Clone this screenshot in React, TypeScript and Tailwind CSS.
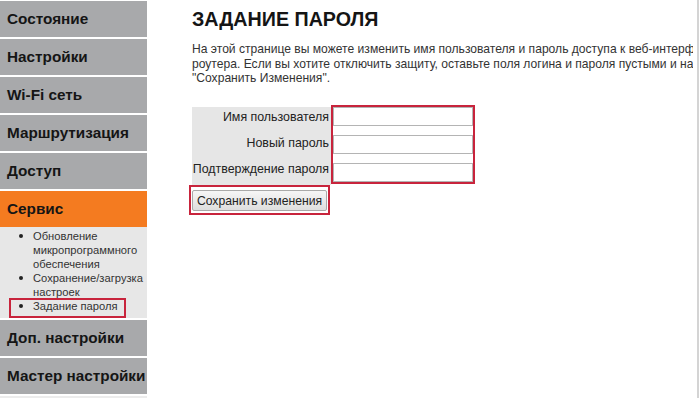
import type { ReactNode } from 'react';

const font = { fontFamily: '"Liberation Sans", Arial, sans-serif' };

function NavItem({ children, active }: { children: ReactNode; active?: boolean }) {
  return (
    <div
      className={`h-[36px] flex items-center pl-[7px] text-[15.3px] font-bold text-[#151515] whitespace-nowrap ${
        active ? 'bg-[#f47b20]' : 'bg-[#a8a9ab]'
      }`}
    >
      {children}
    </div>
  );
}

function SubItem({ children, marked }: { children: ReactNode; marked?: boolean }) {
  return (
    <li className="relative flex">
      <span className="w-[14px] shrink-0 flex justify-start pt-[5px]">
        <span className="w-[4px] h-[4px] rounded-full bg-[#222]" />
      </span>
      <span>{children}</span>
      {marked && (
        <div className="absolute left-[-10px] top-[-1px] w-[117px] h-[20px] border-2 border-[#c8243c]" />
      )}
    </li>
  );
}

export default function App() {
  return (
    <div className="flex w-[700px] h-[398px] bg-white overflow-hidden" style={font}>
      {/* Sidebar */}
      <div className="w-[147px] shrink-0 flex flex-col gap-[2px] pt-[1px]">
        <NavItem>Состояние</NavItem>
        <NavItem>Настройки</NavItem>
        <NavItem>Wi-Fi сеть</NavItem>
        <NavItem>Маршрутизация</NavItem>
        <NavItem>Доступ</NavItem>
        <div className="flex flex-col">
          <NavItem active>Сервис</NavItem>
          <ul className="bg-[#e7e7e7] pl-[19px] pr-[1px] pt-[2px] pb-[5px] text-[11.2px] leading-[14px] text-[#333]">
            <SubItem>
              Обновление
              <br />
              микропрограммного
              <br />
              обеспечения
            </SubItem>
            <SubItem>
              Сохранение/загрузка
              <br />
              настроек
            </SubItem>
            <SubItem marked>Задание пароля</SubItem>
          </ul>
        </div>
        <NavItem>Доп. настройки</NavItem>
        <NavItem>Мастер настройки</NavItem>
        <div className="flex-1 bg-[#ececec]" />
      </div>

      {/* Main content */}
      <div className="w-[546px] shrink-0 overflow-hidden pl-[45px] pt-[8px]">
        <h1 className="text-[19.7px] leading-[23px] font-bold text-[#151515] whitespace-nowrap">ЗАДАНИЕ ПАРОЛЯ</h1>
        <div className="mt-[11px] text-[12.1px] leading-[14.5px] text-[#333] whitespace-nowrap">
          <p>На этой странице вы можете изменить имя пользователя и пароль доступа к веб-интерфейсу</p>
          <p>роутера. Если вы хотите отключить защиту, оставьте поля логина и пароля пустыми и нажмите</p>
          <p>"Сохранить Изменения".</p>
        </div>

        <div className="mt-[19px] flex items-start">
          <div className="w-[139px] mt-[2px] bg-[#e6e6e6] flex flex-col text-[12.4px] leading-[14px] text-[#222]">
            <div className="h-[26px] pt-[3px] pr-[2px] text-right whitespace-nowrap">Имя пользователя</div>
            <div className="h-[26px] pt-[3px] pr-[2px] text-right whitespace-nowrap">Новый пароль</div>
            <div className="h-[26px] pt-[3px] pr-[2px] text-right whitespace-nowrap">Подтверждение пароля</div>
          </div>
          <div className="flex flex-col gap-[9px] border-2 border-[#c8243c] bg-white">
            <input className="w-[140px] h-[19px] border border-[#b4b4b4] bg-white outline-none" />
            <input className="w-[140px] h-[19px] border border-[#b4b4b4] bg-white outline-none" type="password" />
            <input className="w-[140px] h-[19px] border border-[#b4b4b4] bg-white outline-none" type="password" />
          </div>
        </div>

        <div className="-ml-[3px] w-fit border-2 border-[#c8243c] p-[1px]">
          <button className="w-[135px] h-[21px] border border-[#a9a9a9] rounded-[2px] bg-gradient-to-b from-[#f6f6f6] to-[#dedede] text-[12.2px] text-[#222] leading-none whitespace-nowrap">
            Сохранить изменения
          </button>
        </div>
      </div>

      <div className="w-[4px] shrink-0" />
      <div className="w-[2px] shrink-0 bg-[#d4d4d4]" />
    </div>
  );
}
